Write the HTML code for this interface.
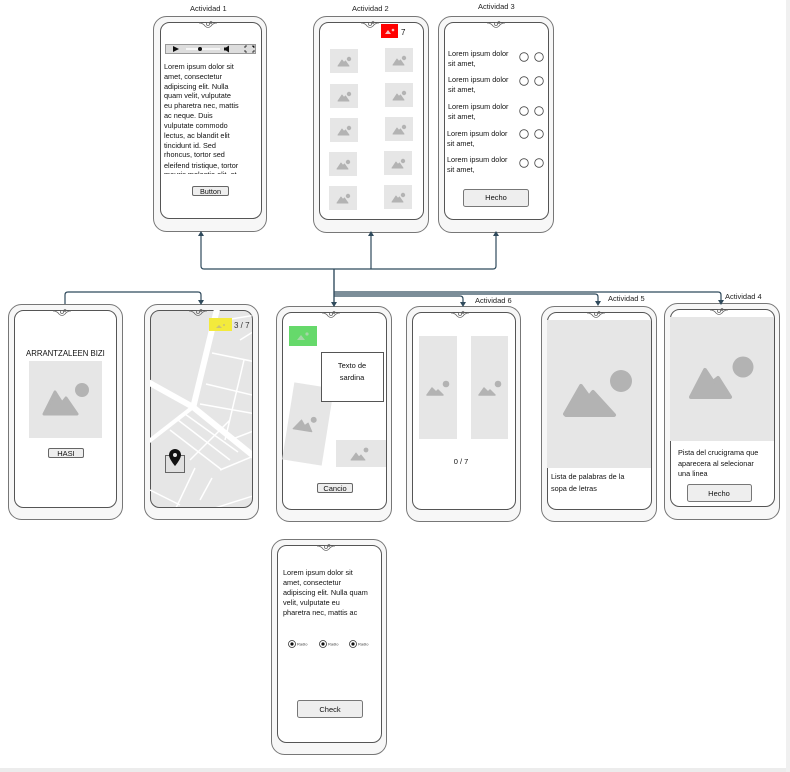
<!DOCTYPE html>
<html><head><meta charset="utf-8"><style>
html,body{margin:0;padding:0;background:#fff;}
svg{display:block;font-family:"Liberation Sans",sans-serif;}
</style></head><body>
<svg width="790" height="772" viewBox="0 0 790 772" xmlns="http://www.w3.org/2000/svg">
<defs>
<g id="mt"><rect x="0" y="0" width="28" height="24" fill="#e6e6e6"/><path d="M8 17 L12 11 L14 13.5 L15.5 12 L19 17 Z" fill="#b3b3b3" stroke="#b3b3b3" stroke-linejoin="round"/><circle cx="19" cy="10" r="2.2" fill="#b3b3b3"/></g>
<clipPath id="mapclip"><rect x="150" y="310" width="102" height="197" rx="8"/></clipPath>
<clipPath id="a1clip"><rect x="160" y="55" width="100" height="119"/></clipPath>
<clipPath id="p1clip"><rect x="14" y="340" width="91" height="20"/></clipPath>
</defs>
<rect x="0" y="768" width="790" height="4" fill="#ececec"/>
<rect x="786" y="0" width="4" height="772" fill="#f0f0f0"/>

<g stroke="#777" stroke-width="1" fill="#f7f7f7">
<rect x="153.5" y="16.5" width="113" height="215" rx="13"/>
<rect x="313.5" y="16.5" width="115" height="216" rx="13"/>
<rect x="438.5" y="16.5" width="115" height="216" rx="13"/>
<rect x="8.5" y="304.5" width="114" height="215" rx="13"/>
<rect x="144.5" y="304.5" width="114" height="215" rx="13"/>
<rect x="276.5" y="306.5" width="115" height="215" rx="13"/>
<rect x="406.5" y="306.5" width="114" height="215" rx="13"/>
<rect x="541.5" y="306.5" width="115" height="215" rx="13"/>
<rect x="664.5" y="303.5" width="115" height="216" rx="13"/>
<rect x="271.5" y="539.5" width="115" height="215" rx="13"/>
</g>
<g stroke="#555" stroke-width="1" fill="#fff">
<rect x="160.5" y="22.5" width="101" height="196" rx="9"/>
<rect x="319.5" y="22.5" width="104" height="197" rx="9"/>
<rect x="444.5" y="22.5" width="104" height="197" rx="9"/>
<rect x="14.5" y="310.5" width="102" height="197" rx="9"/>
<rect x="150.5" y="310.5" width="102" height="197" rx="9" fill="#e6e6e6"/>
<rect x="282.5" y="312.5" width="104" height="197" rx="9"/>
<rect x="412.5" y="312.5" width="103" height="197" rx="9"/>
<rect x="547.5" y="312.5" width="104" height="197" rx="9"/>
<rect x="670.5" y="309.5" width="104" height="197" rx="9"/>
<rect x="277.5" y="545.5" width="104" height="197" rx="9"/>
</g>

<!-- map -->
<g clip-path="url(#mapclip)" stroke="#fff" fill="none">
<path d="M218 305 L193 408" stroke-width="6"/>
<path d="M148 382 L193 407 L256 458" stroke-width="6"/>
<path d="M148 442 L193 407" stroke-width="4"/>
<path d="M212 353 L256 362 M206 384 L256 396 M200 404 L256 414 M240 340 L256 330 M244 360 L225 440 M170 430 L222 470 M178 420 L230 460 M185 414 L238 452 M190 460 L230 420 M195 468 L175 510 M212 478 L200 500 M230 440 L256 430 M220 470 L256 455 M150 490 L180 505 M215 508 L256 495 M225 320 L256 315" stroke-width="1.5"/>
</g>
<rect x="165.5" y="455.5" width="19" height="17" fill="#e0e0e0" stroke="#666"/>
<path d="M175 449 a6 6 0 0 1 6 6 c0 4 -6 11 -6 11 c0 0 -6 -7 -6 -11 a6 6 0 0 1 6 -6z" fill="#111"/><circle cx="175" cy="455" r="2" fill="#e6e6e6"/>

<!-- notches -->
<g fill="none" stroke="#666" stroke-width="0.8">
<path d="M199 23 q4 0 6 3 q3 3 6 0 q2 -3 6 -3"/>
<path d="M361 23 q4 0 6 3 q3 3 6 0 q2 -3 6 -3"/>
<path d="M487 23 q4 0 6 3 q3 3 6 0 q2 -3 6 -3"/>
<path d="M53 311 q4 0 6 3 q3 3 6 0 q2 -3 6 -3"/>
<path d="M189 311 q4 0 6 3 q3 3 6 0 q2 -3 6 -3"/>
<path d="M322 313 q4 0 6 3 q3 3 6 0 q2 -3 6 -3"/>
<path d="M451 313 q4 0 6 3 q3 3 6 0 q2 -3 6 -3"/>
<path d="M587 313 q4 0 6 3 q3 3 6 0 q2 -3 6 -3"/>
<path d="M710 310 q4 0 6 3 q3 3 6 0 q2 -3 6 -3"/>
<path d="M317 546 q4 0 6 3 q3 3 6 0 q2 -3 6 -3"/>
<circle cx="208" cy="24" r="1.5"/><circle cx="211" cy="22.5" r="1"/>
<circle cx="370" cy="24" r="1.5"/><circle cx="373" cy="22.5" r="1"/>
<circle cx="496" cy="24" r="1.5"/><circle cx="499" cy="22.5" r="1"/>
<circle cx="62" cy="312" r="1.5"/><circle cx="65" cy="310.5" r="1"/>
<circle cx="198" cy="312" r="1.5"/><circle cx="201" cy="310.5" r="1"/>
<circle cx="331" cy="314" r="1.5"/><circle cx="334" cy="312.5" r="1"/>
<circle cx="460" cy="314" r="1.5"/><circle cx="463" cy="312.5" r="1"/>
<circle cx="596" cy="314" r="1.5"/><circle cx="599" cy="312.5" r="1"/>
<circle cx="719" cy="311" r="1.5"/><circle cx="722" cy="309.5" r="1"/>
<circle cx="326" cy="547" r="1.5"/><circle cx="329" cy="545.5" r="1"/>
</g>

<!-- connectors -->
<g stroke="#2f4a5c" stroke-width="1.2" fill="none">
<path d="M334 306 V269 M201 236 V266 Q201 269 204 269 H493 Q496 269 496 266 V236 M371 236 V269"/>
<path d="M65 304 V295 Q65 292 68 292 H198 Q201 292 201 295 V301"/>
<path d="M334 269 V302 M334 292 H718 Q721 292 721 295 V301 M334 294 H595 Q598 294 598 297 V302 M334 296 H460 Q463 296 463 299 V303"/>
</g>
<g fill="#2f4a5c">
<path d="M198 236 L201 231 L204 236Z M368 236 L371 231 L374 236Z M493 236 L496 231 L499 236Z"/>
<path d="M198 300 L201 305 L204 300Z M331 302 L334 307 L337 302Z M460 302 L463 307 L466 302Z M595 301 L598 306 L601 301Z M718 300 L721 305 L724 300Z"/>
</g>

<!-- titles -->
<g font-size="7.5" fill="#222">
<text x="190" y="11">Actividad 1</text>
<text x="352" y="11">Actividad 2</text>
<text x="478" y="9">Actividad 3</text>
<text x="475" y="303">Actividad 6</text>
<text x="608" y="301">Actividad 5</text>
<text x="725" y="299">Actividad 4</text>
</g>

<!-- A1 -->
<rect x="165.5" y="44.5" width="90" height="9" fill="#ddd" stroke="#999"/>
<path d="M173 46 L179 49 L173 52Z" fill="#111"/>
<line x1="186" y1="49" x2="220" y2="49" stroke="#fff" stroke-width="1.5"/>
<circle cx="200" cy="49" r="2" fill="#111"/>
<path d="M224 47.5 h2 l3 -2 v7 l-3 -2 h-2z" fill="#111"/>
<path d="M245 46 v2 M245 46 h2 M252 46 h2 v2 M245 52 v-2 M245 52 h2 M254 52 v-2 M254 52 h-2" stroke="#111" stroke-width="0.8"/>
<g font-size="7.3" fill="#111" clip-path="url(#a1clip)">
<text x="164" y="69">Lorem ipsum dolor sit</text>
<text x="164" y="79">amet, consectetur</text>
<text x="164" y="89">adipiscing elit. Nulla</text>
<text x="164" y="98">quam velit, vulputate</text>
<text x="164" y="108">eu pharetra nec, mattis</text>
<text x="164" y="118">ac neque. Duis</text>
<text x="164" y="128">vulputate commodo</text>
<text x="164" y="138">lectus, ac blandit elit</text>
<text x="164" y="148">tincidunt id. Sed</text>
<text x="164" y="157">rhoncus, tortor sed</text>
<text x="164" y="168">eleifend tristique, tortor</text>
<text x="164" y="177">mauris molestie elit, et</text>
</g>
<rect x="192.5" y="186.5" width="36" height="9" rx="1.5" fill="#eee" stroke="#666"/>
<text x="210.5" y="194" font-size="7.3" text-anchor="middle" fill="#111">Button</text>

<!-- A2 -->
<rect x="381" y="24" width="17" height="14" fill="#f00"/>
<path d="M385 34 L388 30 L391 34Z" fill="#f6c0c0"/><circle cx="393" cy="30" r="1.3" fill="#f6c0c0"/>
<text x="401" y="35" font-size="8" fill="#111">7</text>
<use href="#mt" x="330" y="49"/><use href="#mt" x="385" y="48"/>
<use href="#mt" x="330" y="84"/><use href="#mt" x="385" y="83"/>
<use href="#mt" x="330" y="118"/><use href="#mt" x="385" y="117"/>
<use href="#mt" x="329" y="152"/><use href="#mt" x="384" y="151"/>
<use href="#mt" x="329" y="186"/><use href="#mt" x="384" y="185"/>

<!-- A3 -->
<g font-size="7.3" fill="#111">
<text x="448" y="56">Lorem ipsum dolor</text><text x="448" y="66">sit amet,</text>
<text x="448" y="82">Lorem ipsum dolor</text><text x="448" y="92">sit amet,</text>
<text x="448" y="109">Lorem ipsum dolor</text><text x="448" y="119">sit amet,</text>
<text x="447" y="136">Lorem ipsum dolor</text><text x="447" y="146">sit amet,</text>
<text x="447" y="162">Lorem ipsum dolor</text><text x="447" y="172">sit amet,</text>
</g>
<g fill="#fff" stroke="#444" stroke-width="0.8">
<circle cx="524" cy="57" r="4.3"/><circle cx="539" cy="57" r="4.3"/>
<circle cx="524" cy="81" r="4.3"/><circle cx="539" cy="81" r="4.3"/>
<circle cx="524" cy="111" r="4.3"/><circle cx="539" cy="111" r="4.3"/>
<circle cx="524" cy="134" r="4.3"/><circle cx="539" cy="134" r="4.3"/>
<circle cx="524" cy="163" r="4.3"/><circle cx="539" cy="163" r="4.3"/>
</g>
<rect x="463.5" y="189.5" width="65" height="17" rx="2" fill="#eee" stroke="#777"/>
<text x="496" y="200" font-size="7.5" text-anchor="middle" fill="#111">Hecho</text>

<!-- P1 -->
<text x="26" y="356" font-size="7.8" fill="#111" clip-path="url(#p1clip)">ARRANTZALEEN BIZITZA</text>
<rect x="29" y="361" width="73" height="77" fill="#e6e6e6"/>
<path d="M44 414 L55 392 L62 403 L66 398 L77 414Z" fill="#b3b3b3" stroke="#b3b3b3" stroke-linejoin="round" stroke-width="3"/>
<circle cx="82" cy="390" r="7" fill="#b3b3b3"/>
<rect x="48.5" y="448.5" width="35" height="9" rx="1.5" fill="#eee" stroke="#666"/>
<text x="66" y="456" font-size="7.5" text-anchor="middle" fill="#111">HASI</text>

<!-- P2 -->
<rect x="209" y="318" width="23" height="13" fill="#f3ea3c"/>
<path d="M216 328 L219 325 L222 328Z" fill="#c9c07a"/><circle cx="224" cy="325" r="1" fill="#c9c07a"/>
<text x="234" y="328" font-size="8" fill="#333">3 / 7</text>

<!-- P3 -->
<rect x="289" y="326" width="28" height="20" fill="#66d96b"/>
<path d="M297 340 L301 335 L305 340Z" fill="#a5d6a7"/><circle cx="307" cy="334" r="1.6" fill="#a5d6a7"/>
<g transform="translate(308,424) rotate(9)"><rect x="-20" y="-39" width="40" height="78" fill="#e6e6e6"/>
<path d="M-14 7 L-7 -3 L-3 2 L0 -1 L5 7Z" fill="#b3b3b3" stroke="#b3b3b3" stroke-linejoin="round"/><circle cx="5" cy="-5" r="3" fill="#b3b3b3"/></g>
<rect x="321.5" y="352.5" width="62" height="49" fill="#fff" stroke="#555"/>
<text x="352" y="368" font-size="7.5" text-anchor="middle" fill="#111">Texto de</text>
<text x="352" y="380" font-size="7.5" text-anchor="middle" fill="#111">sardina</text>
<rect x="336" y="440" width="50" height="27" fill="#e6e6e6"/>
<path d="M351 460 L356 453 L359 457 L361 455 L365 460Z" fill="#b3b3b3" stroke="#b3b3b3" stroke-linejoin="round"/><circle cx="366" cy="450" r="2.4" fill="#b3b3b3"/>
<rect x="317.5" y="483.5" width="35" height="9" rx="1.5" fill="#eee" stroke="#666"/>
<text x="335" y="491" font-size="7.5" text-anchor="middle" fill="#111">Cancio</text>

<!-- P4 -->
<rect x="419" y="336" width="38" height="103" fill="#e6e6e6"/>
<rect x="471" y="336" width="37" height="103" fill="#e6e6e6"/>
<path d="M427 395 L432 388 L436 392 L438 390 L443 395Z" fill="#b3b3b3" stroke="#b3b3b3" stroke-linejoin="round" stroke-width="1.5"/><circle cx="446" cy="384" r="3.3" fill="#b3b3b3"/>
<path d="M479 395 L484 388 L488 392 L490 390 L495 395Z" fill="#b3b3b3" stroke="#b3b3b3" stroke-linejoin="round" stroke-width="1.5"/><circle cx="498" cy="384" r="3.3" fill="#b3b3b3"/>
<text x="461" y="464" font-size="7.5" text-anchor="middle" fill="#111">0 / 7</text>

<!-- P5 -->
<rect x="547" y="320" width="104" height="148" fill="#e6e6e6"/>
<path d="M565 414 L581 386 L589 397 L593 392 L614 415 L566 415Z" fill="#b3b3b3" stroke="#b3b3b3" stroke-linejoin="round" stroke-width="4"/>
<circle cx="621" cy="381" r="11" fill="#b3b3b3"/>
<text x="551" y="479" font-size="7.3" fill="#111">Lista de palabras de la</text>
<text x="551" y="491" font-size="7.3" fill="#111">sopa de letras</text>

<!-- P6 -->
<rect x="670" y="317" width="104" height="124" fill="#e6e6e6"/>
<path d="M691 397 L705 370 L713 382 L718 378 L730 397Z" fill="#b3b3b3" stroke="#b3b3b3" stroke-linejoin="round" stroke-width="4"/>
<circle cx="743" cy="367" r="10.5" fill="#b3b3b3"/>
<text x="678" y="455" font-size="7.3" fill="#111">Pista del crucigrama que</text>
<text x="678" y="466" font-size="7.3" fill="#111">aparecera al selecionar</text>
<text x="678" y="476" font-size="7.3" fill="#111">una linea</text>
<rect x="687.5" y="484.5" width="64" height="17" rx="2" fill="#eee" stroke="#777"/>
<text x="719" y="496" font-size="7.5" text-anchor="middle" fill="#111">Hecho</text>

<!-- Bottom -->
<g font-size="7.3" fill="#111">
<text x="283" y="575">Lorem ipsum dolor sit</text>
<text x="283" y="585">amet, consectetur</text>
<text x="283" y="595">adipiscing elit. Nulla quam</text>
<text x="283" y="605">velit, vulputate eu</text>
<text x="283" y="615">pharetra nec, mattis ac</text>
</g>
<g fill="#fff" stroke="#333" stroke-width="0.8">
<circle cx="292" cy="644" r="3.5"/><circle cx="323" cy="644" r="3.5"/><circle cx="353" cy="644" r="3.5"/>
</g>
<g fill="#111"><circle cx="292" cy="644" r="1.6"/><circle cx="323" cy="644" r="1.6"/><circle cx="353" cy="644" r="1.6"/></g>
<g font-size="4" fill="#444"><text x="297" y="645.5">Radio</text><text x="328" y="645.5">Radio</text><text x="358" y="645.5">Radio</text></g>
<rect x="297.5" y="700.5" width="65" height="17" rx="2" fill="#eee" stroke="#777"/>
<text x="330" y="712" font-size="7.5" text-anchor="middle" fill="#111">Check</text>
</svg>
</body></html>
